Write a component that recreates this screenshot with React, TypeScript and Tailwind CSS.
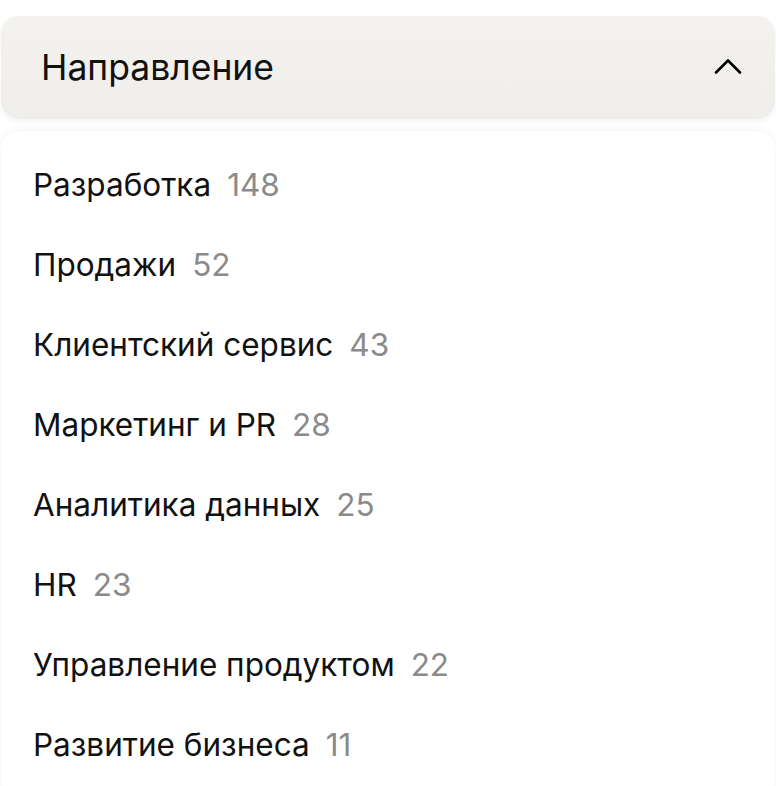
const directions = [
  { label: 'Разработка', count: 148 },
  { label: 'Продажи', count: 52 },
  { label: 'Клиентский сервис', count: 43 },
  { label: 'Маркетинг и PR', count: 28 },
  { label: 'Аналитика данных', count: 25 },
  { label: 'HR', count: 23 },
  { label: 'Управление продуктом', count: 22 },
  { label: 'Развитие бизнеса', count: 11 },
];

export default function App() {
  return (
    <div
      className="min-h-[786px] bg-white px-px pt-4"
      style={{ fontFamily: 'Inter, "Noto Sans", sans-serif' }}
    >
      <button
        type="button"
        className="flex h-[103px] w-full items-center justify-between rounded-[18px] bg-gradient-to-b from-[#f3f2ef] to-[#efeeea] pl-10 pr-[33px] text-left shadow-[0_2px_6px_rgba(0,0,0,0.05)]"
      >
        <span className="text-[35.5px] leading-none text-[#111]">Направление</span>
        <svg width="28" height="18" viewBox="0 0 28 18" fill="none" className="mb-1">
          <path d="M2 15.5 14 3.5 26 15.5" stroke="#000" strokeWidth="2.6" strokeLinecap="round" strokeLinejoin="round" />
        </svg>
      </button>
      <div className="mt-3 rounded-[18px] bg-white pt-[14px] pb-3 shadow-[0_0_8px_rgba(0,0,0,0.06)]">
        <ul className="flex flex-col">
          {directions.map((item) => (
            <li key={item.label} className="flex h-20 items-center gap-4 px-8">
              <span className="text-[31.5px] leading-none text-[#111]">{item.label}</span>
              <span className="text-[31.5px] leading-none text-[#8a8a8a]">{item.count}</span>
            </li>
          ))}
        </ul>
      </div>
    </div>
  );
}
